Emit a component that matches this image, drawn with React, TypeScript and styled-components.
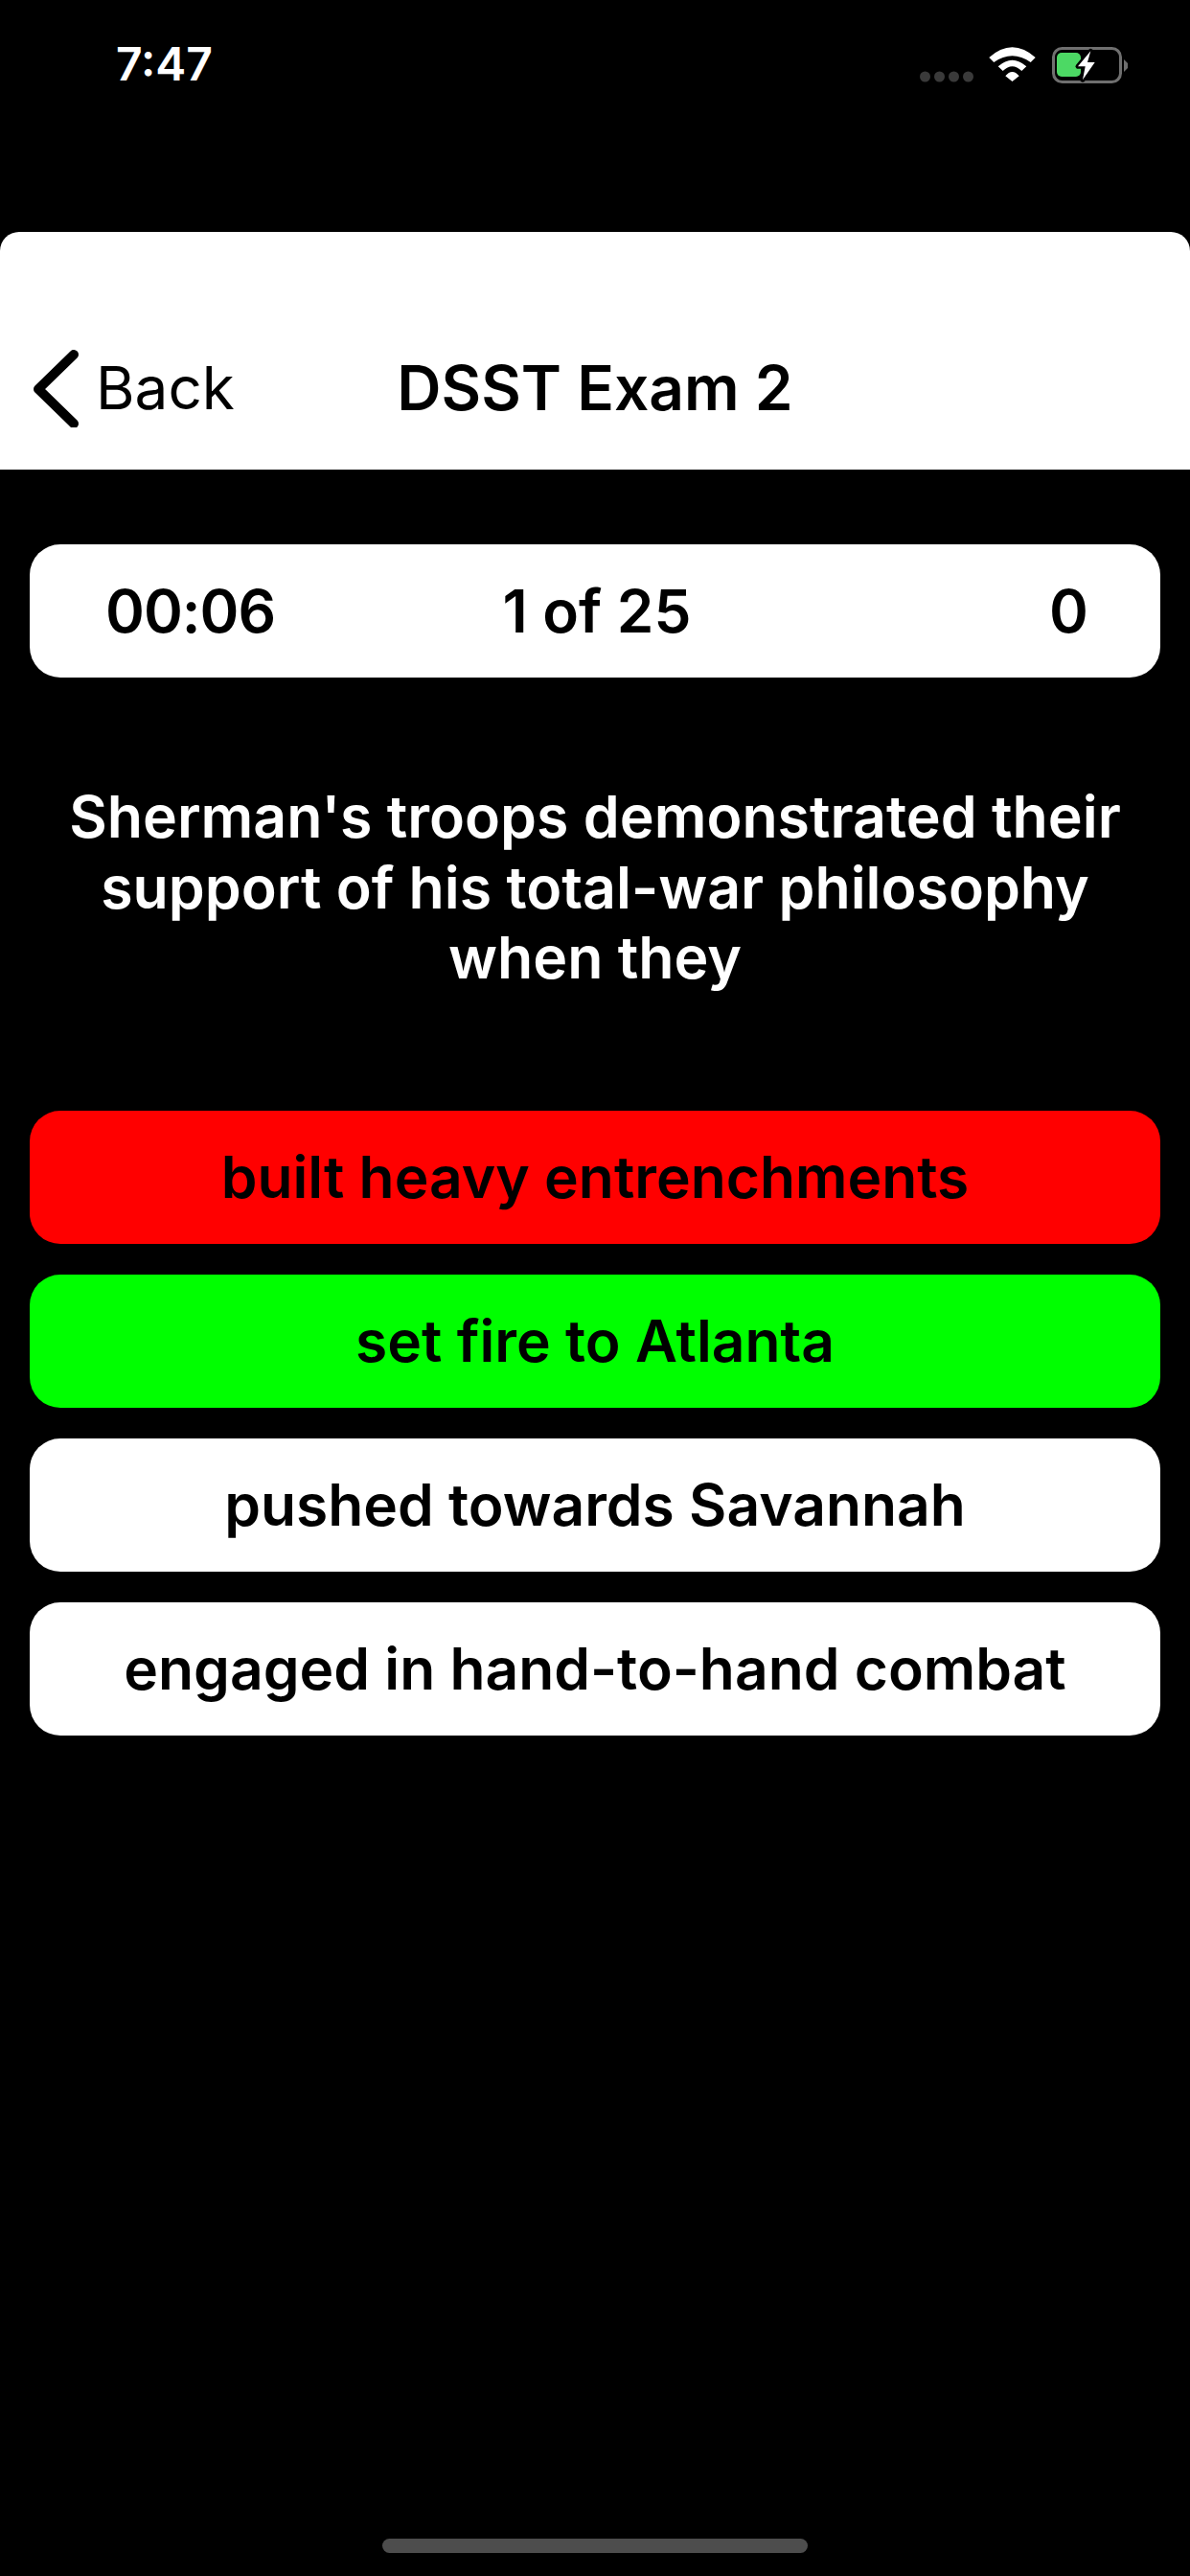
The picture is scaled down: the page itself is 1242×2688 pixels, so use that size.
import React from "react";
import styled, { createGlobalStyle } from "styled-components";

const answers = [
  { text: "built heavy entrenchments", color: "#ff0000" },
  { text: "set fire to Atlanta", color: "#00ff00" },
  { text: "pushed towards Savannah", color: "#ffffff" },
  { text: "engaged in hand-to-hand combat", color: "#ffffff" },
];

const App: React.FC = () => {
  return (
    <Screen>
      <GlobalStyle />
      <StatusBar>
        <Time>7:47</Time>
        <StatusIcons viewBox="0 0 217 40" width="217" height="40">
          <circle cx="5.5" cy="31" r="5.5" fill="#3a3a3a" />
          <circle cx="20.5" cy="31" r="5.5" fill="#3a3a3a" />
          <circle cx="35.5" cy="31" r="5.5" fill="#3a3a3a" />
          <circle cx="50.5" cy="31" r="5.5" fill="#3a3a3a" />
          <path
            fill="#fff"
            d="M72.3 11Q96.5 -10.4 120.7 11L115.700 16Q96.500 2.600 77.300 16Z M81.700 20.300Q96.500 7.100 111.300 20.300L106.300 25Q96.500 15.600 86.700 25Z M89.300 30.300Q96.500 21.700 103.700 30.300L96.500 36Z"
          />
          <rect x="139.500" y="1.500" width="70" height="35" rx="9" fill="none" stroke="#6f6f6f" strokeWidth="3" />
          <path d="M213 13L217 17V22L213 26Z" fill="#6f6f6f" />
          <rect x="143" y="6" width="25" height="25" rx="5" fill="#4cd964" />
          <path
            d="M178.300 4.300L165 20.300H172.700L170 34.300L182.700 16H175Z"
            fill="#fff"
            stroke="#000"
            strokeWidth="5"
            paintOrder="stroke"
            strokeLinejoin="round"
          />
        </StatusIcons>
      </StatusBar>
      <Header>
        <BackButton>
          <svg viewBox="0 0 52 84" width="52" height="84" fill="none">
            <path d="M46 8L9 44L46 80" stroke="#000" strokeWidth="10" strokeLinecap="round" strokeLinejoin="round" />
          </svg>
          <BackLabel>Back</BackLabel>
        </BackButton>
        <Title>DSST Exam 2</Title>
      </Header>
      <Content>
        <SummaryBar>
          <Timer>00:06</Timer>
          <Counter>1 of 25</Counter>
          <Score>0</Score>
        </SummaryBar>
        <Question>
          Sherman's troops demonstrated their
          <br />
          support of his total-war philosophy
          <br />
          when they
        </Question>
        <AnswerList>
          {answers.map((answer) => (
            <AnswerButton key={answer.text} $color={answer.color}>
              {answer.text}
            </AnswerButton>
          ))}
        </AnswerList>
      </Content>
      <HomeIndicator />
    </Screen>
  );
};

const GlobalStyle = createGlobalStyle`
  html, body {
    margin: 0;
    padding: 0;
    background: #000;
  }
`;

const Screen = styled.div`
  display: flex;
  flex-direction: column;
  position: relative;
  width: 1242px;
  height: 2688px;
  overflow: hidden;
  background: #000;
  font-family: Inter, "Liberation Sans", sans-serif;
  color: #000;
`;

const StatusBar = styled.div`
  display: flex;
  justify-content: space-between;
  align-items: flex-start;
  height: 242px;
  box-sizing: border-box;
  padding: 37px 65px 0 121px;
`;

const Time = styled.div`
  font-size: 48px;
  line-height: 60px;
  font-weight: 600;
  color: #fff;
`;

const StatusIcons = styled.svg`
  margin-top: 12px;
`;

const Header = styled.div`
  display: grid;
  grid-template-columns: 1fr auto 1fr;
  align-items: center;
  height: 248px;
  box-sizing: border-box;
  padding: 76px 31px 0;
  background: #fff;
  border-radius: 20px 20px 0 0;
`;

const BackButton = styled.div`
  display: flex;
  align-items: center;
  gap: 17px;
`;

const BackLabel = styled.span`
  font-size: 62px;
  font-weight: 400;
`;

const Title = styled.div`
  font-size: 64px;
  font-weight: 600;
  text-align: center;
`;

const Content = styled.div`
  display: flex;
  flex-direction: column;
  padding: 78px 31px 0;
`;

const SummaryBar = styled.div`
  display: grid;
  grid-template-columns: 1fr auto 1fr;
  align-items: center;
  height: 139px;
  box-sizing: border-box;
  padding: 0 75px 0 79px;
  background: #fff;
  border-radius: 32px;
  font-size: 62px;
  font-weight: 600;
`;

const Timer = styled.div`
  text-align: left;
  letter-spacing: -1px;
`;

const Counter = styled.div`
  text-align: center;
`;

const Score = styled.div`
  text-align: right;
`;

const Question = styled.div`
  margin-top: 109px;
  font-size: 60.800px;
  line-height: 73.500px;
  font-weight: 600;
  text-align: center;
  color: #fff;
`;

const AnswerList = styled.div`
  display: flex;
  flex-direction: column;
  gap: 31.500px;
  margin-top: 122px;
`;

const AnswerButton = styled.div<{ $color: string }>`
  display: flex;
  align-items: center;
  justify-content: center;
  height: 139.500px;
  background: ${(props) => props.$color};
  border-radius: 32px;
  font-size: 60.500px;
  font-weight: 600;
`;

const HomeIndicator = styled.div`
  position: absolute;
  left: 399px;
  bottom: 24px;
  width: 444px;
  height: 15px;
  border-radius: 8px;
  background: #4d4d4d;
`;

export default App;
